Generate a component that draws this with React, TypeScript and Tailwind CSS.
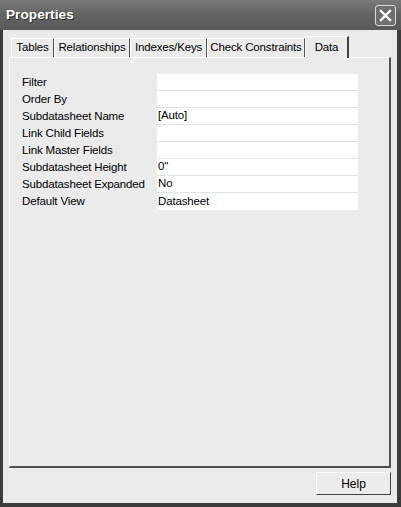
import React from 'react';

const TABS: { name: string; w: string }[] = [
  { name: 'Tables', w: 'w-[43px]' },
  { name: 'Relationships', w: 'w-[76px]' },
  { name: 'Indexes/Keys', w: 'w-[77px]' },
  { name: 'Check Constraints', w: 'w-[98px]' },
  { name: 'Data', w: 'w-[44px]' },
];

const PROPS: { label: string; value: string }[] = [
  { label: 'Filter', value: '' },
  { label: 'Order By', value: '' },
  { label: 'Subdatasheet Name', value: '[Auto]' },
  { label: 'Link Child Fields', value: '' },
  { label: 'Link Master Fields', value: '' },
  { label: 'Subdatasheet Height', value: '0"' },
  { label: 'Subdatasheet Expanded', value: 'No' },
  { label: 'Default View', value: 'Datasheet' },
];

const font = { fontFamily: '"Liberation Sans", Arial, sans-serif' };

export default function App() {
  return (
    <div className="w-[401px] h-[507px] flex flex-col bg-[#3c3c3c] overflow-hidden" style={font}>
      {/* title bar */}
      <div className="h-[30px] flex items-center justify-between pl-[6px] pr-[5px] bg-gradient-to-b from-[#7a7a7a] via-[#626262] to-[#595959]">
        <span className="text-white font-bold text-[13.5px] tracking-[0.1px] [text-shadow:1px_1px_0_#333]">Properties</span>
        <div className="w-[21px] h-[21px] rounded-[3px] border border-[#dcdcdc] bg-[#6e6e6e] flex items-center justify-center">
          <svg width="13" height="13" viewBox="0 0 13 13">
            <path d="M2 2 L11 11 M11 2 L2 11" stroke="#ffffff" strokeWidth="2.4" strokeLinecap="square" />
          </svg>
        </div>
      </div>

      {/* body */}
      <div className="flex-1 ml-[3px] mr-[4px] mb-[4px] bg-[#ebebeb] flex flex-col px-[6px] pt-[5px]">
        {/* tabs */}
        <div className="flex items-end h-[22px] pl-[2px] text-[11.5px] tracking-[-0.15px] text-black">
          {TABS.map((t) => {
            const active = t.name === 'Data';
            return (
              <div
                key={t.name}
                className={
                  active
                    ? 'h-[22px] pt-[2px] text-center bg-[#ebebeb] border-t border-l border-white border-r-2 border-r-[#404040] -mb-px relative z-10 ' + t.w
                    : 'h-[19px] flex items-center justify-center border-t border-l border-white border-r border-r-[#505050] ' + t.w
                }
              >
                {t.name}
              </div>
            );
          })}
        </div>

        {/* panel */}
        <div className="h-[411px] border-t border-l border-white border-r-2 border-r-[#505050] border-b-2 border-b-[#505050] pt-[16px] pl-[12px]">
          <div className="flex flex-col w-[336px]">
            {PROPS.map((p, i) => (
              <div key={p.label} className="flex h-[17px] items-center text-[11.5px] tracking-[-0.15px] text-black">
                <span className="w-[135px] whitespace-nowrap">{p.label}</span>
                <div
                  className={
                    'flex-1 h-[17px] bg-white flex items-center pl-[1px] ' +
                    (i < PROPS.length - 1 ? 'border-b border-[#e2e2e2]' : '')
                  }
                >
                  {p.value}
                </div>
              </div>
            ))}
          </div>
        </div>

        {/* buttons */}
        <div className="flex justify-end pt-[4px]">
          <button className="w-[75px] h-[23px] bg-[#ececec] border border-t-white border-l-white border-r-[#404040] border-b-[#404040] text-[12px] text-black">
            Help
          </button>
        </div>
      </div>
    </div>
  );
}
